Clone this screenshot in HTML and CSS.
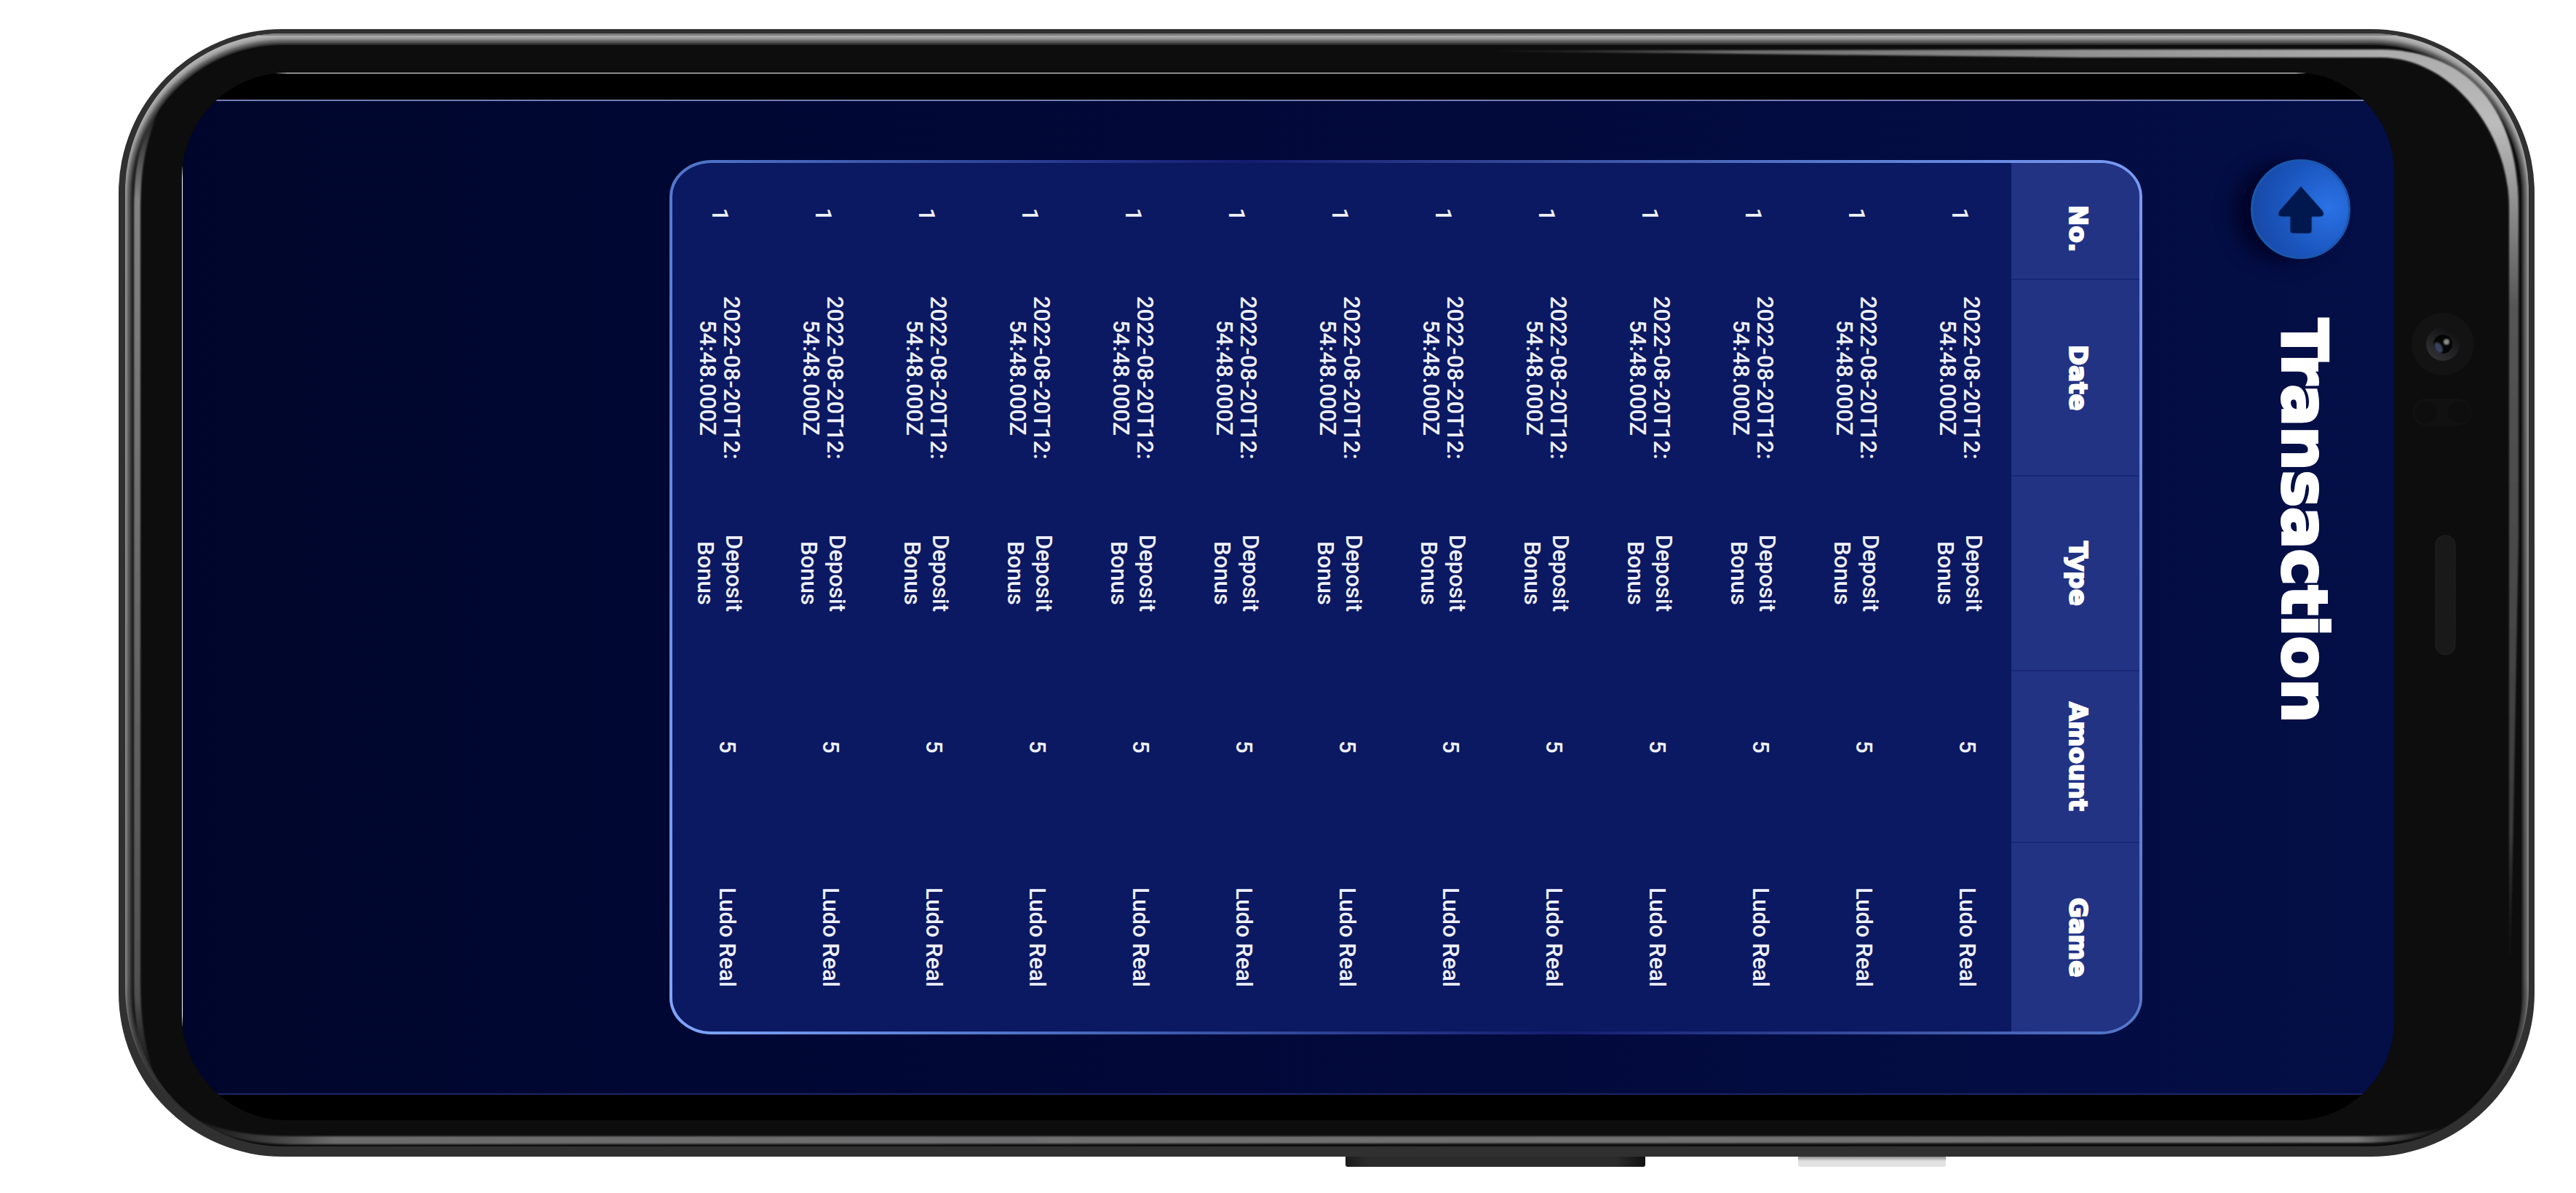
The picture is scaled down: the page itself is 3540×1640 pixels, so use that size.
FILE: index.html
```html
<!DOCTYPE html>
<html lang="en">
<head>
<meta charset="utf-8">
<title>Transaction</title>
<link rel="stylesheet" href="styles.css">
</head>
<body>
<div class="phone">
  <svg class="shell" viewBox="0 0 3320 1550" preserveAspectRatio="none" aria-hidden="true">
    <defs>
      <clipPath id="inner"><rect x="9" y="6" width="3303" height="1530" rx="217"/></clipPath>
      <filter id="soft" x="-5%" y="-5%" width="110%" height="110%"><feGaussianBlur stdDeviation="4"/></filter>
      <filter id="edge" x="-5%" y="-5%" width="110%" height="110%"><feGaussianBlur stdDeviation="1"/></filter>
      <linearGradient id="rim" x1="0" y1="0" x2="0" y2="1"><stop offset="0" stop-color="#b4b4b4"/><stop offset=".85" stop-color="#989898"/><stop offset="1" stop-color="#303030"/></linearGradient>
      <linearGradient id="leftStrip" x1="0" y1="0" x2="0" y2="1"><stop offset="0" stop-color="#808080" stop-opacity="0"/><stop offset=".1" stop-color="#848484"/><stop offset=".9" stop-color="#505050"/><stop offset="1" stop-color="#303030" stop-opacity="0"/></linearGradient>
      <linearGradient id="bottomStrip"><stop offset="0" stop-color="#505050" stop-opacity="0"/><stop offset=".07" stop-color="#6c6c6d"/><stop offset=".96" stop-color="#747474"/><stop offset="1" stop-color="#505050" stop-opacity="0"/></linearGradient>
      <linearGradient id="topStrip"><stop offset="0" stop-color="#606060" stop-opacity="0"/><stop offset=".3" stop-color="#707070"/><stop offset="1" stop-color="#acacac"/></linearGradient>
      <linearGradient id="rightStrip" x1="0" y1="0" x2="0" y2="1"><stop offset="0" stop-color="#acacac"/><stop offset=".08" stop-color="#bcbcbc"/><stop offset=".28" stop-color="#555"/><stop offset=".85" stop-color="#3c3c3c"/><stop offset="1" stop-color="#222" stop-opacity="0"/></linearGradient>
      <linearGradient id="volume"><stop offset="0" stop-color="#1c1c1c"/><stop offset=".08" stop-color="#2b2b2b"/><stop offset=".9" stop-color="#2b2b2b"/><stop offset="1" stop-color="#111"/></linearGradient>
      <linearGradient id="power" x1="0" y1="0" x2="0" y2="1"><stop offset="0" stop-color="#8c8c8c"/><stop offset=".45" stop-color="#e2e2e2"/></linearGradient>
      <linearGradient id="lens" x1="0" y1="1" x2=".7" y2="0"><stop offset="0" stop-color="#36363a"/><stop offset="1" stop-color="#101011"/></linearGradient>
      <pattern id="mesh" width="4" height="4" patternUnits="userSpaceOnUse"><rect width="4" height="4" fill="#151515"/><path d="M0 0h2v2H0zM2 2h2v2H2z" fill="#1d1d1d"/></pattern>
    </defs>
    <path d="M1686 1548h412v13q0 3-3 3h-406q-3 0-3-3z" fill="url(#volume)"/>
    <path d="M2308 1550h203v11q0 3-3 3h-197q-3 0-3-3z" fill="url(#power)"/>
    <rect width="3320" height="1550" rx="225" fill="#303030"/>
    <g clip-path="url(#inner)">
      <rect x="9" y="6" width="3303" height="1530" fill="url(#rim)"/>
      <rect x="9" y="6" width="3303" height="3" fill="#808080"/>
      <rect x="14" y="17" width="3293" height="1519" rx="212" fill="#0d0d0e" filter="url(#soft)"/>
      <rect x="20" y="22" width="3282" height="1514" rx="206" fill="#0d0d0e"/>
    </g>
    <g filter="url(#edge)">
      <path d="M60 98C30 150 21 180 21 250V1310C21 1390 35 1430 62 1468C45 1430 30 1390 30 1310V250C30 180 40 150 60 98Z" fill="url(#leftStrip)"/>
      <path d="M77 1480C120 1512 170 1522 240 1522H3090C3140 1522 3170 1517 3202 1507C3170 1524 3140 1530 3090 1531L240 1533C170 1533 120 1518 77 1480Z" fill="url(#bottomStrip)"/>
      <path d="M1850 30L2700 28H3110V39H2700Z" fill="url(#topStrip)"/>
      <path d="M3109 28C3225 29 3298 105 3298 245V700L3287 1300H3285V245C3285 140 3205 39 3109 39Z" fill="url(#rightStrip)"/>
    </g>
    <circle cx="3194" cy="433" r="43" fill="#131313"/>
    <circle cx="3194" cy="433" r="23" fill="url(#lens)"/>
    <circle cx="3194" cy="433" r="13" fill="#050506"/>
    <ellipse cx="3188" cy="438" rx="5" ry="8" fill="#39435f" transform="rotate(-30 3188 438)" filter="url(#edge)"/>
    <circle cx="3199" cy="430" r="4" fill="#8a8a8a" filter="url(#edge)"/>
    <rect x="3152" y="508" width="81" height="37" rx="18" fill="#111112"/>
    <circle cx="3171" cy="527" r="15" fill="#0e0e0f"/>
    <circle cx="3216" cy="527" r="15" fill="#0e0e0f"/>
    <rect x="3184" y="696" width="27" height="164" rx="13" fill="url(#mesh)" stroke="#222"/>
  </svg>
  <div class="display">
    <main class="app">
      <header class="topbar">
        <button class="back" type="button" aria-label="Back">
          <svg class="arrow" viewBox="0 0 68 70" aria-hidden="true"><path d="M34 3L64 37Q68 45 59 45H49V64Q49 68 45 68H23Q19 68 19 64V45H8Q0 45 4 37Z" fill="#00184d" stroke="#1a50a8" stroke-width="1"/></svg>
        </button>
        <h1 class="title">Transaction</h1>
      </header>
      <section class="card">
        <table class="history">
          <colgroup><col class="c-no"><col class="c-date"><col class="c-type"><col class="c-amount"><col class="c-game"></colgroup>
          <thead><tr><th class="no">No.</th><th>Date</th><th>Type</th><th>Amount</th><th>Game</th></tr></thead>
          <tbody>
            <tr><td class="no">1</td><td class="date">2022-08-20T12:<br>54:48.000Z</td><td>Deposit<br>Bonus</td><td class="amount">5</td><td class="game">Ludo Real</td></tr>
            <tr><td class="no">1</td><td class="date">2022-08-20T12:<br>54:48.000Z</td><td>Deposit<br>Bonus</td><td class="amount">5</td><td class="game">Ludo Real</td></tr>
            <tr><td class="no">1</td><td class="date">2022-08-20T12:<br>54:48.000Z</td><td>Deposit<br>Bonus</td><td class="amount">5</td><td class="game">Ludo Real</td></tr>
            <tr><td class="no">1</td><td class="date">2022-08-20T12:<br>54:48.000Z</td><td>Deposit<br>Bonus</td><td class="amount">5</td><td class="game">Ludo Real</td></tr>
            <tr><td class="no">1</td><td class="date">2022-08-20T12:<br>54:48.000Z</td><td>Deposit<br>Bonus</td><td class="amount">5</td><td class="game">Ludo Real</td></tr>
            <tr><td class="no">1</td><td class="date">2022-08-20T12:<br>54:48.000Z</td><td>Deposit<br>Bonus</td><td class="amount">5</td><td class="game">Ludo Real</td></tr>
            <tr><td class="no">1</td><td class="date">2022-08-20T12:<br>54:48.000Z</td><td>Deposit<br>Bonus</td><td class="amount">5</td><td class="game">Ludo Real</td></tr>
            <tr><td class="no">1</td><td class="date">2022-08-20T12:<br>54:48.000Z</td><td>Deposit<br>Bonus</td><td class="amount">5</td><td class="game">Ludo Real</td></tr>
            <tr><td class="no">1</td><td class="date">2022-08-20T12:<br>54:48.000Z</td><td>Deposit<br>Bonus</td><td class="amount">5</td><td class="game">Ludo Real</td></tr>
            <tr><td class="no">1</td><td class="date">2022-08-20T12:<br>54:48.000Z</td><td>Deposit<br>Bonus</td><td class="amount">5</td><td class="game">Ludo Real</td></tr>
            <tr><td class="no">1</td><td class="date">2022-08-20T12:<br>54:48.000Z</td><td>Deposit<br>Bonus</td><td class="amount">5</td><td class="game">Ludo Real</td></tr>
            <tr><td class="no">1</td><td class="date">2022-08-20T12:<br>54:48.000Z</td><td>Deposit<br>Bonus</td><td class="amount">5</td><td class="game">Ludo Real</td></tr>
            <tr><td class="no">1</td><td class="date">2022-08-20T12:<br>54:48.000Z</td><td>Deposit<br>Bonus</td><td class="amount">5</td><td class="game">Ludo Real</td></tr>
          </tbody>
        </table>
      </section>
    </main>
  </div>
</div>
</body>
</html>
```
FILE: styles.css
```css
* { box-sizing: border-box; }

body {
  margin: 0;
  padding: 40px 57px 50px 163px;
  background: #fff;
  font-family: Roboto, "Liberation Sans", sans-serif;
}

.phone {
  position: relative;
  display: flex;
  height: calc(100vh - 90px);
  padding: 60px 193px 50px 87px;
}

.shell {
  position: absolute;
  inset: 0;
  width: 100%;
  height: 100%;
  overflow: visible;
}

.display {
  position: relative;
  flex: 1;
  min-width: 0;
  display: flex;
  padding: 1px 0 0 1px;
  border-radius: 145px 136px 136px 145px;
  overflow: hidden;
  background:
    linear-gradient(#fff, #fff) top / 100% 1px no-repeat,
    linear-gradient(#fff, #fff) left / 1px 100% no-repeat,
    #000;
}

/* The app is laid out sideways: lines run downwards, blocks run right to left. */
.app {
  flex: 1;
  min-width: 0;
  display: flex;
  flex-direction: column;
  writing-mode: vertical-rl;
  border-top: 36px solid #000;
  border-bottom: 35px solid #000;
  background:
    linear-gradient(#a3abd6, #4a5396) top / 100% 2px no-repeat,
    linear-gradient(#1c2566, #1c2566) bottom / 100% 2px no-repeat,
    linear-gradient(to right, #00062b, #000733 25%, #020a3c 60%, #040f47);
}

.topbar {
  display: flex;
  align-items: center;
  gap: 82px;
  padding-block: 60px 149px;
  padding-inline: 82px;
}

.back {
  display: grid;
  place-items: center;
  width: 137px;
  height: 137px;
  padding: 0;
  border: 3px solid #1a57ae;
  border-radius: 50%;
  background: radial-gradient(circle at 80% 48%, #2b72e6, #1a55bd 55%, #17429c);
  box-shadow: -24px 4px 24px #00042a;
}

.arrow {
  width: 68px;
  height: 70px;
}

.title {
  margin: 0;
  padding-block-end: 8px;
  font: bold 85px/100px "DejaVu Sans", Verdana, sans-serif;
  color: #fff;
  -webkit-text-stroke: 4px #fff;
}

.card {
  flex: 1;
  min-width: 0;
  margin-inline: 83px;
  margin-block-end: 669px;
  border: 4px solid transparent;
  border-radius: 58px / 50px;
  overflow: hidden;
  background:
    linear-gradient(#0b1862, #0b1862) padding-box,
    linear-gradient(70deg, #82a6ff, #5278cc 18%, #3a55a8 30%, #141c70 50%, #3a50a0 68%, #5578cc 82%, #7b9cf5) border-box;
}

.history {
  table-layout: fixed;
  height: 100%;
  border-collapse: collapse;
}

.c-no { height: 160px; }
.c-date { height: 270px; }
.c-type { height: 268px; }
.c-amount { height: 236px; }

th, td {
  padding: 0;
  text-align: center;
  vertical-align: middle;
}

th {
  width: 176px;
  padding-block-end: 8px;
  background: #223384;
  font: bold 34px/40px "DejaVu Sans", Verdana, sans-serif;
  color: #fff;
  -webkit-text-stroke: 2px #fff;
}

th + th { border-top: 2px solid #192774; }

td {
  width: 142px;
  font-size: 31px;
  font-weight: 500;
  line-height: 39px;
  color: #eef0fb;
}

th.no { padding-inline-start: 22px; }
td.no { padding-inline-end: 18px; }
.date { line-height: 33px; }
.amount { padding-inline-end: 26px; }
.amount, .game { padding-block-end: 20px; }
```
